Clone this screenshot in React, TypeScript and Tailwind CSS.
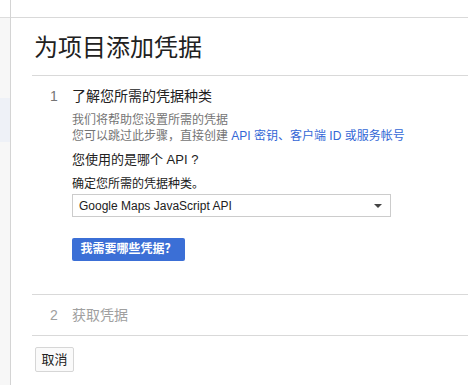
export default function App() {
  const font = { fontFamily: '"Liberation Sans", "Noto Sans CJK SC", sans-serif' };
  return (
    <div className="flex h-[385px] w-[468px] overflow-hidden bg-white" style={font}>
      {/* collapsed left nav */}
      <aside className="flex w-[11px] shrink-0 flex-col border-r border-[#d4d4d4] bg-[#f7f7f7]">
        <div className="h-[18px] border-b border-[#dddddd] bg-white" />
        <div className="h-[80px]" />
        <div className="h-[44px] bg-[#eef1f7]" />
        <div className="flex-1" />
      </aside>

      <main className="flex flex-1 flex-col">
        <div className="h-[18px] shrink-0 border-b border-[#d9d9d9]" />

        <div className="flex flex-col pl-[21px]">
          <h1 className="h-[58px] border-b border-[#d9d9d9] pl-[2px] pt-[14px] text-[24px] leading-[32px] text-[#212121]">
            为项目添加凭据
          </h1>

          {/* step 1 */}
          <div className="flex flex-col border-b border-[#d9d9d9] pb-[33px] pt-[10px]">
            <div className="flex text-[14px] leading-[20px]">
              <span className="ml-[18px] w-[22px] text-[#757575]">1</span>
              <span className="text-[#212121]">了解您所需的凭据种类</span>
            </div>
            <div className="flex flex-col pl-[40px]">
              <p className="mt-[6px] text-[12px] leading-[16px] text-[#757575]">
                我们将帮助您设置所需的凭据
                <br />
                您可以跳过此步骤，直接创建{" "}
                <span className="text-[#3367d6]">API 密钥、客户端 ID 或服务帐号</span>
              </p>
              <p className="mt-[7px] text-[13px] leading-[18px] text-[#212121]">您使用的是哪个 API ?</p>
              <p className="mt-[7px] text-[12px] leading-[16px] text-[#212121]">确定您所需的凭据种类。</p>
              <div className="mt-[2px] flex h-[23px] w-[319px] items-center justify-between border border-[#cccccc] bg-white pl-[6px] pr-[8px] text-[12px] text-[#212121]">
                <span>Google Maps JavaScript API</span>
                <span className="h-0 w-0 border-x-[4px] border-t-[4px] border-x-transparent border-t-[#444444]" />
              </div>
              <button className="mt-[21px] h-[23px] w-[113px] rounded-[2px] bg-[#3b6fd6] text-[12px] font-bold leading-[23px] text-white">
                我需要哪些凭据？
              </button>
            </div>
          </div>

          {/* step 2 */}
          <div className="flex border-b border-[#d9d9d9] py-[10px] text-[14px] leading-[20px] text-[#a0a0a0]">
            <span className="ml-[18px] w-[22px]">2</span>
            <span>获取凭据</span>
          </div>

          <button className="ml-[3px] mt-[11px] h-[25px] w-[39px] rounded-[2px] border border-[#d6d6d6] bg-[#fafafa] text-[13px] text-[#212121]">
            取消
          </button>
        </div>
      </main>
    </div>
  );
}
